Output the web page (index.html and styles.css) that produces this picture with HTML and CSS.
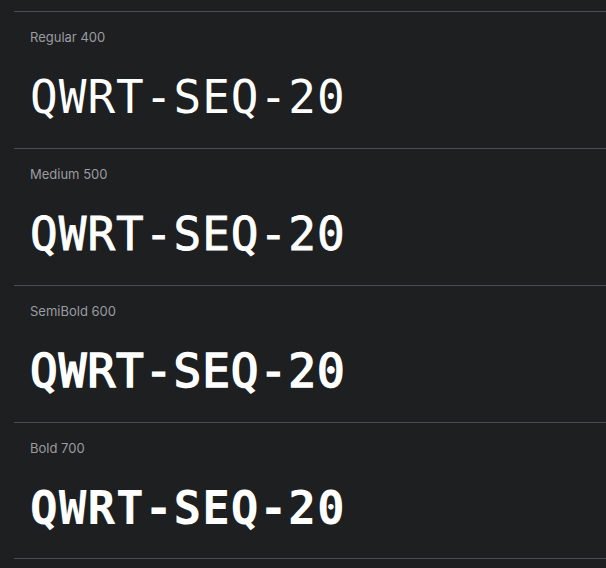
FILE: index.html
```html
<!DOCTYPE html>
<html>
<head>
<meta charset="utf-8">
<link rel="stylesheet" href="styles.css">
</head>
<body>
<div class="list">
  <div class="row">
    <div class="label">Regular 400</div>
    <div class="sample w400">QWRT-SEQ-20</div>
  </div>
  <div class="row">
    <div class="label">Medium 500</div>
    <div class="sample w500">QWRT-SEQ-20</div>
  </div>
  <div class="row">
    <div class="label">SemiBold 600</div>
    <div class="sample w600">QWRT-SEQ-20</div>
  </div>
  <div class="row last">
    <div class="label">Bold 700</div>
    <div class="sample w700">QWRT-SEQ-20</div>
  </div>
</div>
</body>
</html>
```
FILE: styles.css
```css
html, body {
  margin: 0;
  padding: 0;
  background: #1e1f21;
  overflow: hidden;
}
.list {
  padding-top: 11px;
  padding-left: 14px;
}
.row {
  border-top: 1px solid #4b4c4f;
  height: 136px;
  padding-left: 16px;
  box-sizing: content-box;
  display: flex;
  flex-direction: column;
}
.row.last {
  height: 135px;
  border-bottom: 1px solid #4b4c4f;
}
.label {
  font-family: "Inter", "Noto Sans", sans-serif;
  font-size: 13px;
  line-height: 16px;
  color: #9a9ca0;
  margin-top: 17px;
}
.sample {
  font-family: "DejaVu Sans Mono", monospace;
  font-size: 46px;
  line-height: 56px;
  color: #ffffff;
  margin-top: 24px;
  letter-spacing: 1px;
}
.w400 { font-weight: 400; }
.w500 { font-weight: 400; -webkit-text-stroke: 0.8px #ffffff; }
.w600 { font-weight: 400; -webkit-text-stroke: 1.6px #ffffff; }
.w700 { font-weight: 700; }
```
